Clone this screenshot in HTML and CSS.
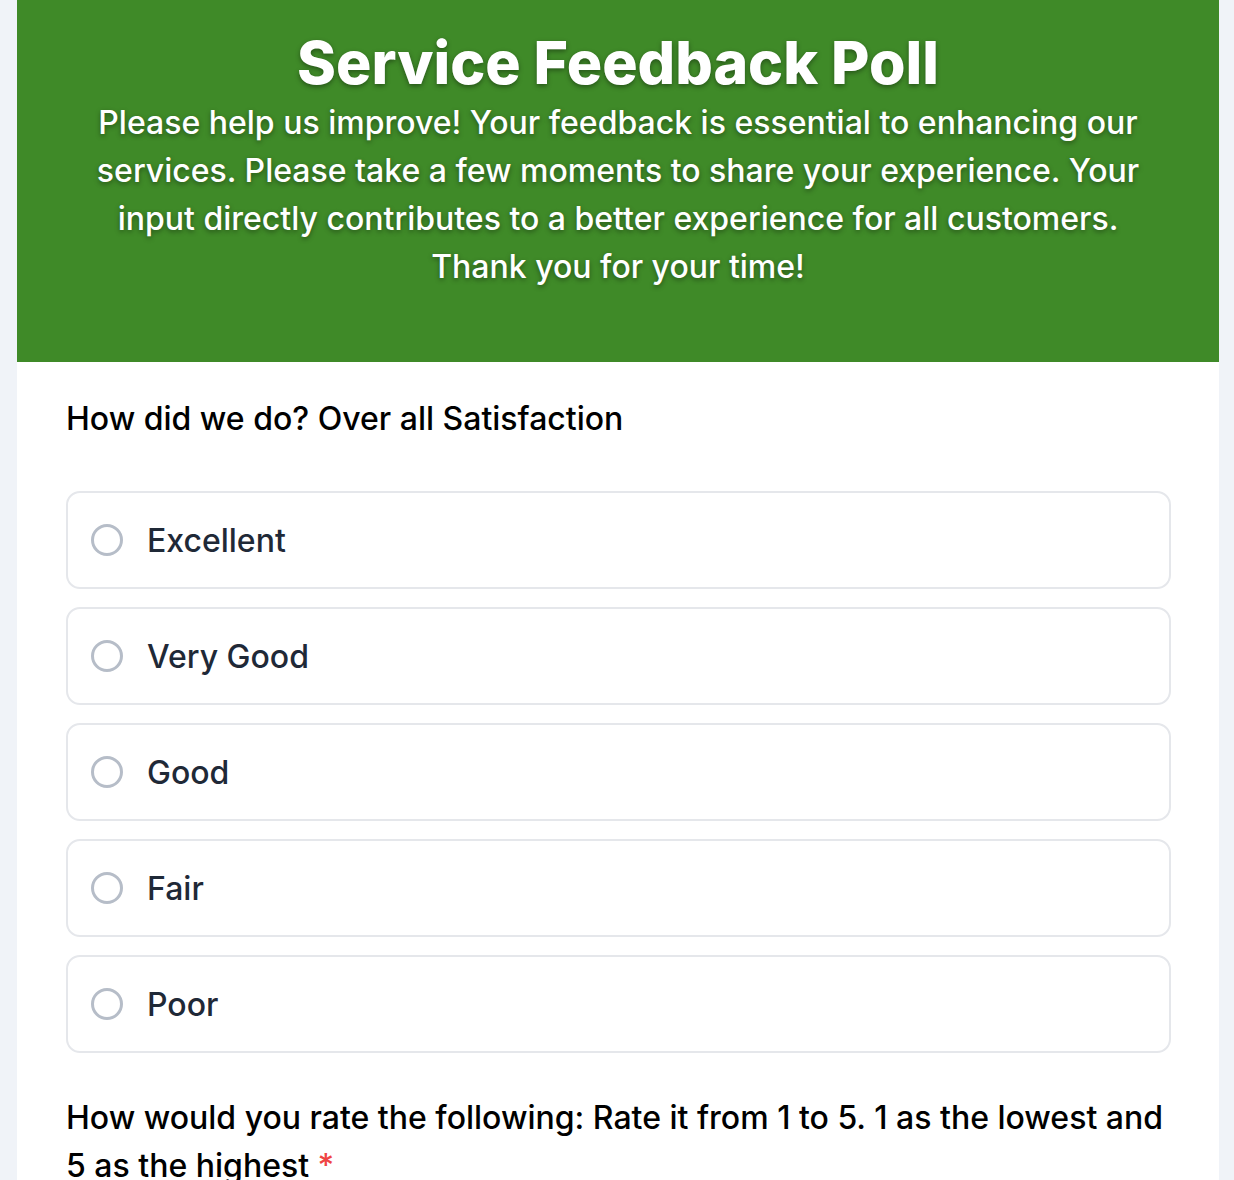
FILE: index.html
```html
<!DOCTYPE html>
<html lang="en">
<head>
    <meta charset="UTF-8">
    <title>Service Feedback Poll</title>
    <link rel="stylesheet" href="styles.css">
</head>
<body>
    <div class="poll-card">
        <div class="poll-header">
            <h1>Service Feedback Poll</h1>
            <p>Please help us improve! Your feedback is essential to enhancing our services. Please take a few moments to share your experience. Your input directly contributes to a better experience for all customers. Thank you for your time!</p>
        </div>

        <div class="poll-body">
            <div class="question">
                <div class="question-label">How did we do? Over all Satisfaction</div>
                <div class="options">
                    <label class="option"><span class="radio"></span><span>Excellent</span></label>
                    <label class="option"><span class="radio"></span><span>Very Good</span></label>
                    <label class="option"><span class="radio"></span><span>Good</span></label>
                    <label class="option"><span class="radio"></span><span>Fair</span></label>
                    <label class="option"><span class="radio"></span><span>Poor</span></label>
                </div>
            </div>

            <div class="question">
                <div class="question-label">How would you rate the following: Rate it from 1 to 5. 1 as the lowest and 5 as the highest <span class="required">*</span></div>
            </div>
        </div>
    </div>
</body>
</html>
```

FILE: styles.css
```css
body {
    font-family: Inter, 'Noto Sans', sans-serif;
    margin: 0;
    background: #f0f3f8;
    color: #000;
}

.poll-card {
    width: 1202px;
    margin-left: 17px;
    min-height: 1180px;
    background: #fff;
}

.poll-header {
    background: #3f8a28;
    color: #fff;
    text-align: center;
    padding: 28px 66px 71px;
    text-shadow: 0 2px 5px rgba(0, 0, 0, 0.4);
}

.poll-header h1 {
    margin: 0;
    font-size: 59px;
    font-weight: 800;
    line-height: 1.2;
}

.poll-header p {
    margin: 0;
    font-size: 32px;
    font-weight: 500;
    line-height: 1.5;
}

.poll-body {
    padding: 33px 48px 0 49px;
}

.question {
    margin-bottom: 41px;
}

.question-label {
    font-size: 32px;
    font-weight: 500;
    line-height: 1.5;
    margin-bottom: 48px;
}

.required {
    color: #ef4444;
}

.options {
    display: flex;
    flex-direction: column;
    gap: 18px;
}

.option {
    display: flex;
    align-items: center;
    gap: 24px;
    height: 98px;
    box-sizing: border-box;
    padding: 1px 23px 0;
    border: 2px solid #e5e7eb;
    border-radius: 14px;
    font-size: 32px;
    font-weight: 500;
    color: #1f2937;
}

.radio {
    width: 32px;
    height: 32px;
    box-sizing: border-box;
    border: 3px solid #b6bdc8;
    border-radius: 50%;
    flex-shrink: 0;
}
```
